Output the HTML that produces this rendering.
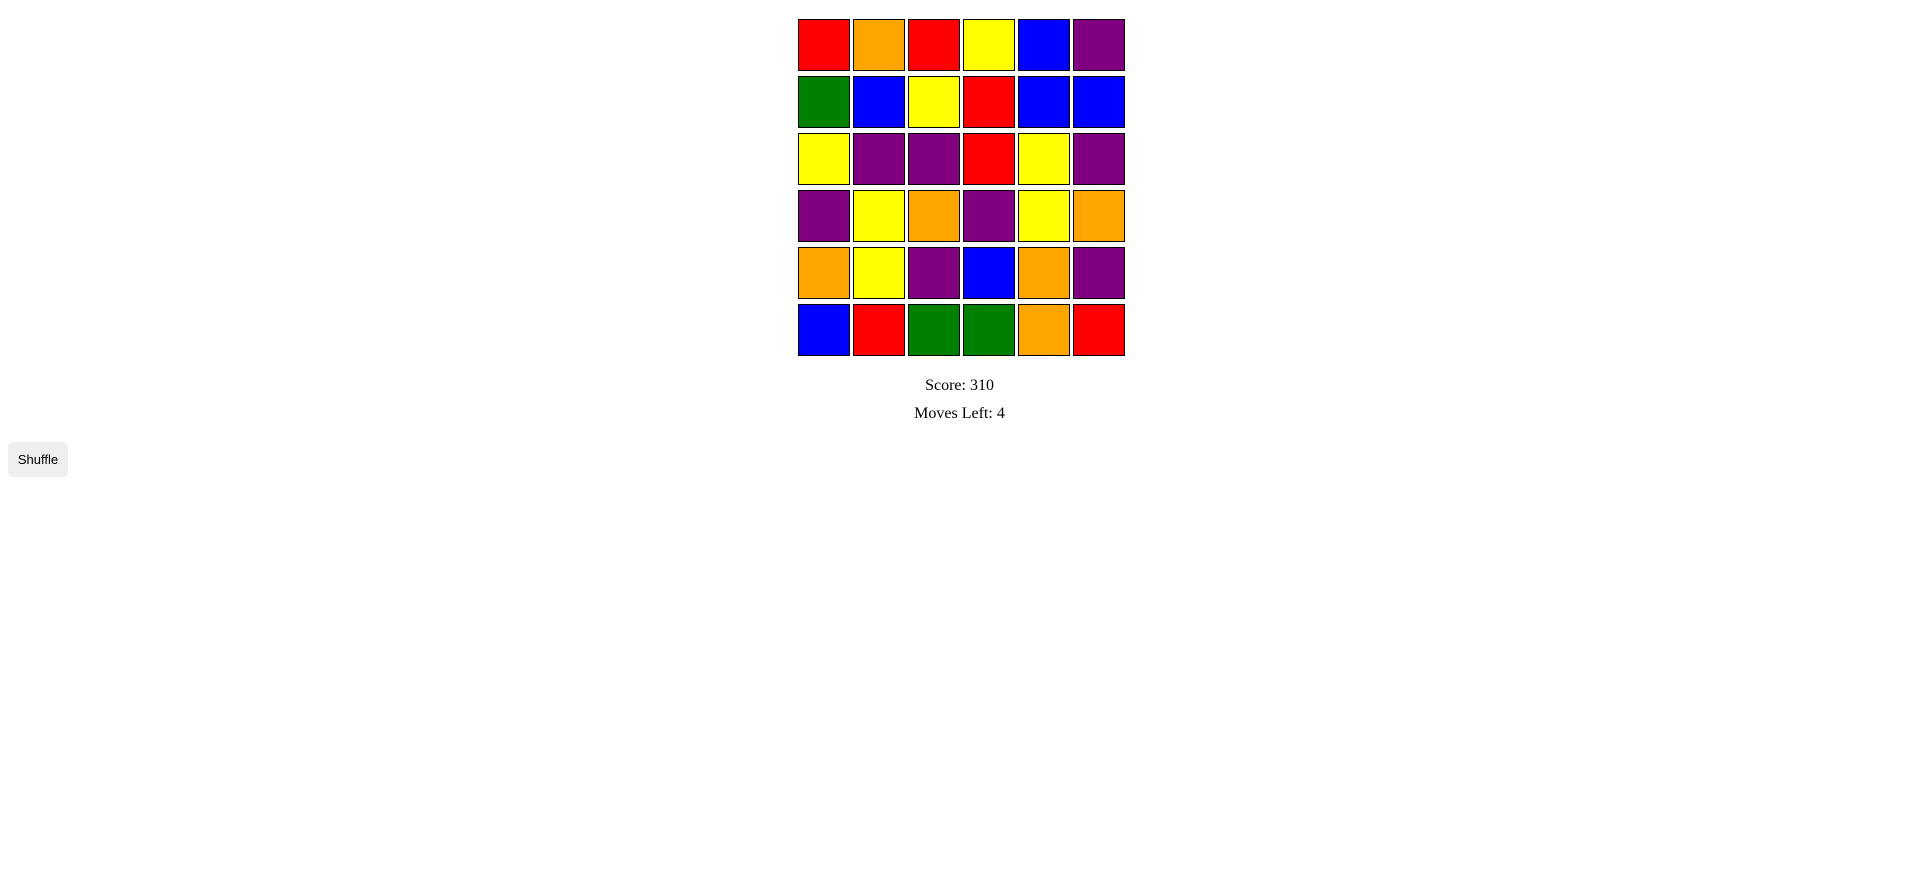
<!DOCTYPE html>
<html><head><meta charset="utf-8"><style>
html,body{margin:0;padding:0;background:#fff;width:1919px;height:892px;overflow:hidden;}
.c{position:absolute;width:50px;height:50px;border:1px solid #000;}
.t{position:absolute;left:0;width:1919px;text-align:center;font-family:"Liberation Serif",serif;font-size:16px;color:#000;line-height:20px;}
.btn{position:absolute;left:8px;top:442px;width:60px;height:35px;background:#efefef;border-radius:5px;font-family:"Liberation Sans",sans-serif;font-size:13px;line-height:35px;text-align:center;color:#000;}
</style></head><body>
<div id="g"></div>
<div class="t" style="top:376px">Score: 310</div>
<div class="t" style="top:404px">Moves Left: 4</div>
<div class="btn">Shuffle</div>
<script>
var R="red",O="orange",Y="yellow",B="blue",P="purple",G="green";
var rows=[[R,O,R,Y,B,P],[G,B,Y,R,B,B],[Y,P,P,R,Y,P],[P,Y,O,P,Y,O],[O,Y,P,B,O,P],[B,R,G,G,O,R]];
var h="";
for(var r=0;r<6;r++)for(var c=0;c<6;c++){h+='<div class="c" style="left:'+(798+c*55)+'px;top:'+(19+r*57)+'px;background:'+rows[r][c]+'"></div>';}
document.getElementById("g").innerHTML=h;
</script>
</body></html>
